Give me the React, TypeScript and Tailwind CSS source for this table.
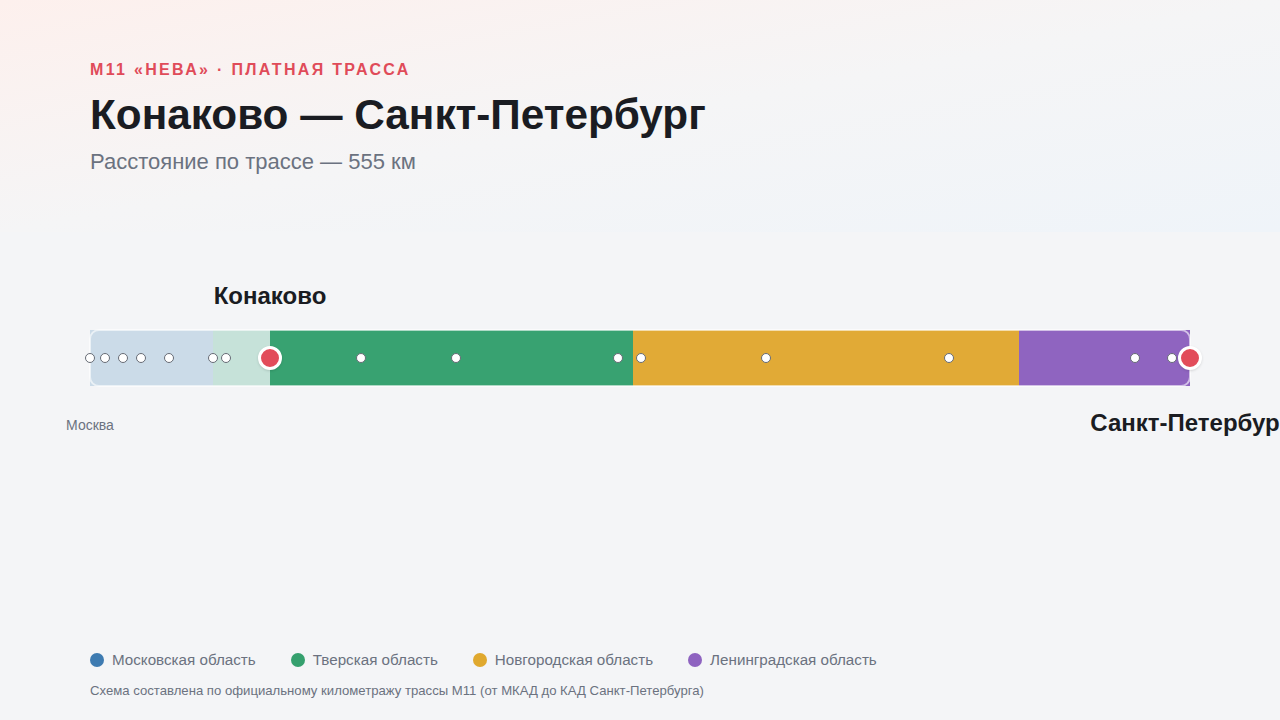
const BAR_KM = 1100;

const segments = [
  { from: 0, to: 123, color: "bg-[#cbdbe8]" },
  { from: 123, to: 180, color: "bg-[#c6e2d9]" },
  { from: 180, to: 543, color: "bg-[#38a271]" },
  { from: 543, to: 929, color: "bg-[#e1aa36]" },
  { from: 929, to: 1100, color: "bg-[#8f64c0]" },
];

const stops = [0, 15, 33, 51, 79, 123, 136, 271, 366, 528, 551, 676, 859, 1045, 1082];
const cities = [180, 1100];

const legend = [
  { label: "Московская область", color: "bg-[#3e7bb1]" },
  { label: "Тверская область", color: "bg-[#35a06e]" },
  { label: "Новгородская область", color: "bg-[#e0a92f]" },
  { label: "Ленинградская область", color: "bg-[#8e63c0]" },
];

const pct = (px: number) => `${(px / BAR_KM) * 100}%`;

export default function App() {
  return (
    <div className="w-[1280px] h-[720px] overflow-hidden bg-[#f4f5f7] flex flex-col font-['Liberation_Sans',Arial,sans-serif]">
      <header className="h-[232px] shrink-0 bg-gradient-to-br from-[#fdf0ed] via-[#f5f5f6] to-[#eff4f9] px-[90px] pt-[58px]">
        <div className="text-[16px] leading-6 font-bold tracking-[0.145em] text-[#e04b59]">
          М11 «НЕВА» · ПЛАТНАЯ ТРАССА
        </div>
        <h1 className="mt-[9px] text-[42.3px] leading-[48px] font-bold text-[#1a1c22]">
          Конаково — Санкт-Петербург
        </h1>
        <div className="mt-[9px] text-[22px] leading-7 text-[#6b7280]">
          Расстояние по трассе — 555 км
        </div>
      </header>

      <section className="mx-[90px] pt-[98px]">
        <div className="relative h-[56px]">
          <div className="flex h-full">
            {segments.map((s) => (
              <div
                key={s.from}
                className={`h-full ${s.color}`}
                style={{ width: pct(s.to - s.from) }}
              />
            ))}
          </div>
          <div className="absolute -inset-px rounded-[10px] border-2 border-white/60 pointer-events-none" />

          {stops.map((x) => (
            <span
              key={x}
              className="absolute top-1/2 w-[10px] h-[10px] -translate-x-1/2 -translate-y-1/2 rounded-full border-[1.5px] border-[#666b75] bg-white"
              style={{ left: pct(x) }}
            />
          ))}
          {cities.map((x) => (
            <span
              key={x}
              className="absolute top-1/2 w-[24px] h-[24px] -translate-x-1/2 -translate-y-1/2 rounded-full border-[3px] border-white bg-[#e24c5a] shadow-sm"
              style={{ left: pct(x) }}
            />
          ))}

          <span
            className="absolute top-[-48px] -translate-x-1/2 whitespace-nowrap text-[24px] leading-7 font-bold text-[#1a1c22]"
            style={{ left: pct(180) }}
          >
            Конаково
          </span>
          <span className="absolute left-0 top-[85px] -translate-x-1/2 whitespace-nowrap text-[14px] leading-5 text-[#6b7280]">
            Москва
          </span>
          <span className="absolute left-full top-[79px] -translate-x-1/2 whitespace-nowrap text-[24px] leading-7 font-bold text-[#1a1c22]">
            Санкт-Петербург
          </span>
        </div>
      </section>

      <footer className="mt-auto px-[90px] pb-[20px]">
        <div className="flex items-center gap-[35px]">
          {legend.map((l) => (
            <div key={l.label} className="flex items-center gap-2">
              <span className={`w-[14px] h-[14px] rounded-full ${l.color}`} />
              <span className="text-[15.2px] leading-5 text-[#6b7280]">{l.label}</span>
            </div>
          ))}
        </div>
        <div className="mt-3 text-[13.15px] leading-[18px] text-[#6b7280]">
          Схема составлена по официальному километражу трассы М11 (от МКАД до КАД Санкт-Петербурга)
        </div>
      </footer>
    </div>
  );
}
